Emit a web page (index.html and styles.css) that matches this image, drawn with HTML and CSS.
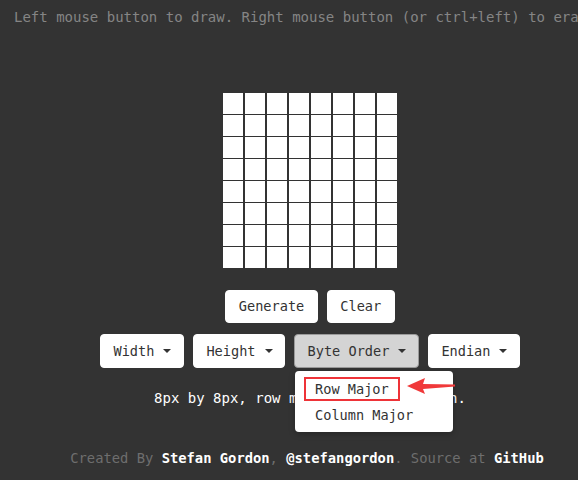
FILE: index.html
```html
<!DOCTYPE html>
<html>
<head>
<meta charset="utf-8">
<link rel="stylesheet" href="styles.css">
</head>
<body>
<div class="page">
  <p class="hint">Left mouse button to draw. Right mouse button (or ctrl+left) to erase.</p>
  <div class="grid" id="grid"></div>
  <div class="row row-actions">
    <button class="btn">Generate</button>
    <button class="btn">Clear</button>
  </div>
  <div class="row row-options">
    <button class="btn">Width<span class="caret"></span></button>
    <button class="btn">Height<span class="caret"></span></button>
    <div class="dropdown">
      <button class="btn active">Byte Order<span class="caret"></span></button>
      <ul class="menu">
        <li class="item highlighted">Row Major</li>
        <li class="item">Column Major</li>
      </ul>
    </div>
    <button class="btn">Endian<span class="caret"></span></button>
  </div>
  <p class="status">8px by 8px, row major, little endian.</p>
  <p class="footer">Created By <a>Stefan Gordon</a>, <a>@stefangordon</a>. Source at <a>GitHub</a></p>
  <svg class="arrow" width="60" height="24" viewBox="0 0 60 24">
    <polygon points="2,9 20,1 18,7 50,7.5 50,9.5 18,12 20,17" fill="#f0393a"/>
  </svg>
</div>
<script>
  var g = document.getElementById('grid');
  for (var i = 0; i < 64; i++) {
    var c = document.createElement('div');
    c.className = 'cell';
    g.appendChild(c);
  }
</script>
</body>
</html>
```

FILE: styles.css
```css
html, body {
  margin: 0;
  padding: 0;
  background: #333333;
  overflow: hidden;
}

.page {
  position: relative;
  width: 620px;
  height: 480px;
  display: flex;
  flex-direction: column;
  align-items: center;
  font-family: "DejaVu Sans Mono", "Liberation Mono", monospace;
}

.hint {
  align-self: flex-start;
  margin: 7px 0 0 14px;
  font-size: 14px;
  line-height: 20px;
  color: #858585;
  white-space: nowrap;
}

.grid {
  margin-top: 66px;
  display: grid;
  grid-template-columns: repeat(8, 20.5px);
  grid-auto-rows: 20.5px;
  gap: 1.5px;
}

.cell {
  background: #ffffff;
}

.row {
  display: flex;
  gap: 9px;
}

.row-actions {
  margin-top: 22px;
}

.row-options {
  margin-top: 11px;
}

.btn {
  display: inline-flex;
  align-items: center;
  height: 33px;
  padding: 0 12.5px;
  font-family: inherit;
  font-size: 13.6px;
  color: #333333;
  background: #ffffff;
  border: 1px solid #ffffff;
  border-radius: 4px;
  cursor: pointer;
}

.row-options .btn {
  height: 34px;
  padding-right: 11.5px;
}

.btn.active {
  background: #d4d4d4;
  border-color: #9a9a9a;
}

.caret {
  display: inline-block;
  width: 0;
  height: 0;
  margin-left: 9px;
  border-top: 4px solid #333333;
  border-left: 4px solid transparent;
  border-right: 4px solid transparent;
}

.dropdown {
  position: relative;
}

.menu {
  position: absolute;
  left: 1px;
  top: 37px;
  width: 158px;
  margin: 0;
  padding: 5px 0 4px;
  list-style: none;
  background: #ffffff;
  border-radius: 4px;
  box-shadow: 0 2px 6px rgba(0, 0, 0, 0.25);
  z-index: 2;
}

.item {
  position: relative;
  padding: 0 20px 0 20px;
  font-size: 13.6px;
  line-height: 26px;
  color: #333333;
  white-space: nowrap;
}

.item.highlighted::after {
  content: "";
  position: absolute;
  left: 9px;
  top: 1px;
  width: 96px;
  height: 24px;
  box-sizing: border-box;
  border: 2.7px solid #ee3338;
}

.status {
  margin: 20px 0 0;
  font-size: 14px;
  line-height: 20px;
  color: #ffffff;
  white-space: nowrap;
}

.footer {
  margin: 40px 0 0;
  padding-right: 6px;
  font-size: 13.8px;
  line-height: 20px;
  color: #6e6e6e;
  white-space: nowrap;
}

.footer a {
  color: #ffffff;
  font-weight: bold;
  text-decoration: none;
}

.arrow {
  position: absolute;
  left: 405px;
  top: 377px;
  z-index: 3;
}
```
